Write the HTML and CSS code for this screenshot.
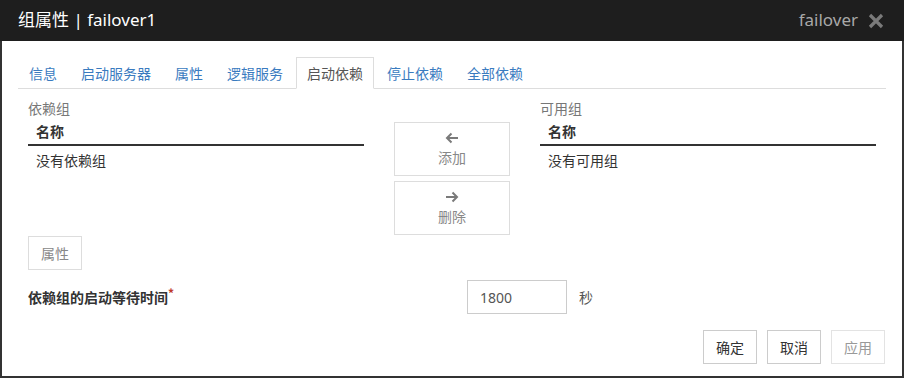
FILE: index.html
```html
<!DOCTYPE html>
<html lang="zh-CN">
<head>
    <meta charset="UTF-8">
    <title>组属性</title>
    <link rel="stylesheet" href="styles.css">
</head>
<body>
    <div class="modal">
        <div class="modalHeader">
            <span class="modalTitle">组属性 | failover1</span>
            <span class="headerRight">
                <span class="groupType">failover</span>
                <svg class="closeIcon" width="16" height="16" viewBox="0 0 16 16">
                    <path d="M2 2 L14 14 M14 2 L2 14" stroke="#7a7a7a" stroke-width="3.2" stroke-linecap="butt"/>
                </svg>
            </span>
        </div>
        <div class="modalBody">
            <ul class="tabs">
                <li><a>信息</a></li>
                <li><a>启动服务器</a></li>
                <li><a>属性</a></li>
                <li><a>逻辑服务</a></li>
                <li class="active"><a>启动依赖</a></li>
                <li><a>停止依赖</a></li>
                <li><a>全部依赖</a></li>
            </ul>
            <div class="tabContent">
                <div class="groupGrid">
                    <div class="groupCol">
                        <div class="colLabel">依赖组</div>
                        <table class="groupTable">
                            <thead><tr><th>名称</th></tr></thead>
                            <tbody><tr><td>没有依赖组</td></tr></tbody>
                        </table>
                    </div>
                    <div class="moveCol">
                        <button class="moveBtn">
                            <svg width="14" height="12" viewBox="0 0 14 12">
                                <path d="M13 6 H2 M6.5 1.5 L2 6 L6.5 10.5" fill="none" stroke="#7a7a7a" stroke-width="2"/>
                            </svg>
                            <span>添加</span>
                        </button>
                        <button class="moveBtn">
                            <svg width="14" height="12" viewBox="0 0 14 12">
                                <path d="M1 6 H12 M7.5 1.5 L12 6 L7.5 10.5" fill="none" stroke="#7a7a7a" stroke-width="2"/>
                            </svg>
                            <span>删除</span>
                        </button>
                    </div>
                    <div class="groupCol">
                        <div class="colLabel">可用组</div>
                        <table class="groupTable">
                            <thead><tr><th>名称</th></tr></thead>
                            <tbody><tr><td>没有可用组</td></tr></tbody>
                        </table>
                    </div>
                </div>
                <button class="btn btnGray">属性</button>
                <div class="waitRow">
                    <label class="waitLabel" for="wait">依赖组的启动等待时间<span class="req">*</span></label>
                    <input class="waitInput" type="text" id="wait" value="1800">
                    <span class="unit">秒</span>
                </div>
            </div>
            <div class="footer">
                <button class="btn">确定</button>
                <button class="btn">取消</button>
                <button class="btn btnDisabled">应用</button>
            </div>
        </div>
    </div>
</body>
</html>
```

FILE: styles.css
```css
body{
    margin: 0;
    font-family: "Noto Sans CJK SC", "Noto Sans", sans-serif;
    font-size: 14px;
    color: #333;
    background: #fff;
}
.modal{
    width: 904px;
    height: 378px;
    box-sizing: border-box;
    border: 2px solid #333;
    border-top: 0;
    background: #fff;
}
.modalHeader{
    height: 41px;
    margin: 0 -2px;
    background: #1e1e1e;
    display: flex;
    align-items: center;
    justify-content: space-between;
    padding: 0 20px 0 18px;
}
.modalTitle{
    color: #fff;
    font-family: "Noto Sans", "Noto Sans CJK SC", sans-serif;
    font-size: 17px;
    line-height: 20px;
    margin-top: -2px;
}
.headerRight{
    display: flex;
    align-items: center;
    gap: 10px;
}
.groupType{
    color: #a8a8a8;
    font-family: "Noto Sans", sans-serif;
    font-size: 17px;
    margin-top: -2px;
}
.closeIcon{
    display: block;
    margin-top: 1px;
}
.modalBody{
    padding: 16px 16px 0 16px;
}
.tabs{
    list-style: none;
    margin: 0;
    padding: 0;
    display: flex;
    border-bottom: 1px solid #ddd;
}
.tabs li{
    margin-right: 2px;
    margin-bottom: -1px;
}
.tabs a{
    display: block;
    padding: 5px 10px;
    line-height: 20px;
    border: 1px solid transparent;
    color: #3a7bbf;
}
.tabs li.active a{
    color: #555;
    border-color: #ddd #ddd transparent #ddd;
    background: #fff;
}
.tabContent{
    padding: 9px 0 0 10px;
}
.groupGrid{
    display: grid;
    grid-template-columns: 336px 116px 336px;
    column-gap: 30px;
}
.colLabel{
    color: #777;
    line-height: 20px;
}
.groupTable{
    width: 100%;
    border-collapse: collapse;
}
.groupTable th{
    text-align: left;
    font-weight: bold;
    line-height: 20px;
    padding: 3px 8px 3px;
    border-bottom: 2px solid #333;
}
.groupTable td{
    line-height: 20px;
    padding: 4px 8px;
}
.moveCol{
    padding-top: 24px;
    display: flex;
    flex-direction: column;
    gap: 5px;
}
.moveBtn{
    height: 54px;
    background: #fff;
    border: 1px solid #ddd;
    font-family: inherit;
    font-size: 14px;
    color: #888;
    display: flex;
    flex-direction: column;
    align-items: center;
    justify-content: center;
    gap: 3px;
    padding: 0;
}
.moveBtn svg{
    display: block;
}
.btn{
    height: 34px;
    padding: 0 12px;
    background: #fff;
    border: 1px solid #ccc;
    font-family: inherit;
    font-size: 14px;
    color: #333;
}
.btnGray{
    margin-top: 1px;
    color: #888;
    border-color: #ddd;
}
.btnDisabled{
    color: #999;
    border-color: #e3e3e3;
}
.waitRow{
    display: flex;
    align-items: center;
    margin-top: 10px;
}
.waitLabel{
    width: 439px;
    font-weight: bold;
}
.req{
    color: #c0392b;
    vertical-align: top;
    font-size: 12px;
    line-height: 12px;
}
.waitInput{
    width: 100px;
    height: 34px;
    box-sizing: border-box;
    border: 1px solid #ccc;
    padding: 0 12px;
    font-family: "Noto Sans", sans-serif;
    font-size: 14px;
    color: #555;
}
.unit{
    margin-left: 12px;
    color: #555;
}
.footer{
    display: flex;
    justify-content: flex-end;
    gap: 10px;
    padding-top: 16px;
    padding-right: 1px;
}
```
